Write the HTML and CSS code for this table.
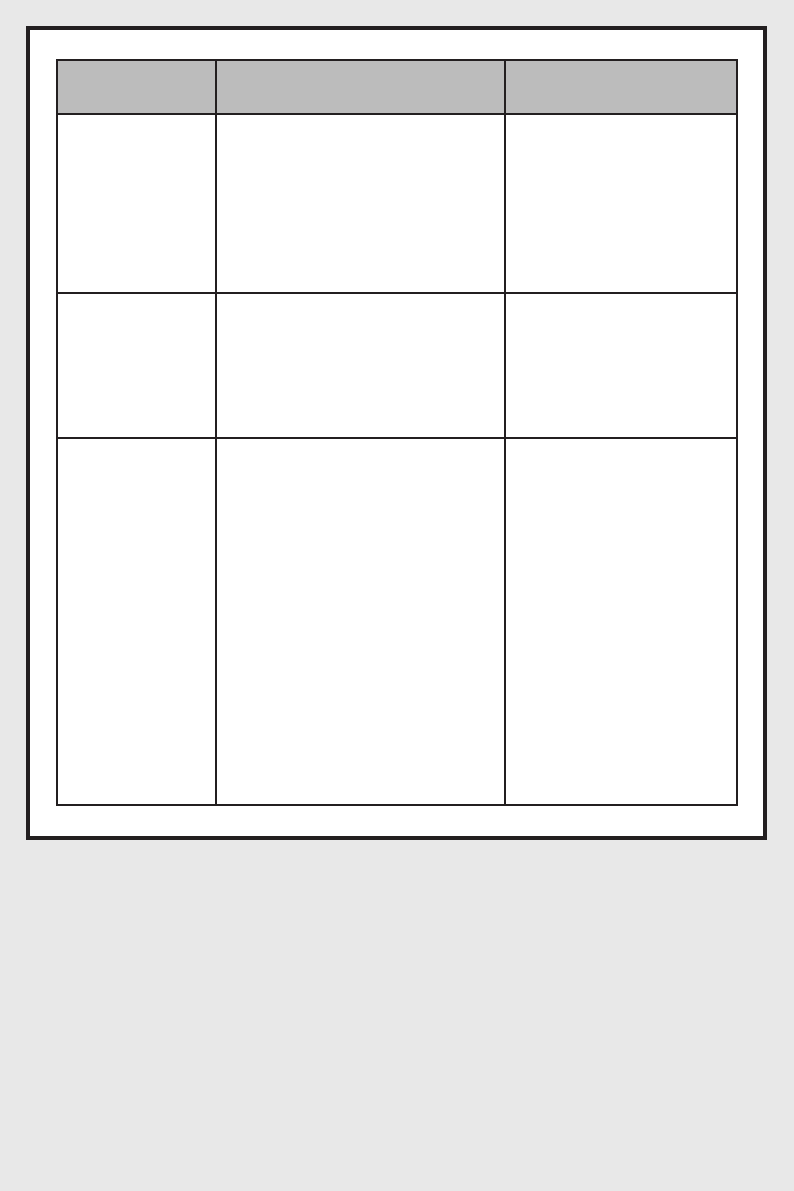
FILE: index.html
```html
<!DOCTYPE html>
<html lang="en">

<head>
    <meta charset="UTF-8">
    <meta name="viewport" content="width=device-width, initial-scale=1.0">
    <title>Worksheet</title>
    <link rel="stylesheet" href="styles.css">
</head>

<body>
    <div class="sheet">
        <table class="grid">
            <colgroup>
                <col class="col-a">
                <col class="col-b">
                <col class="col-c">
            </colgroup>
            <thead>
                <tr class="head-row">
                    <th></th>
                    <th></th>
                    <th></th>
                </tr>
            </thead>
            <tbody>
                <tr class="row-1">
                    <td></td>
                    <td></td>
                    <td></td>
                </tr>
                <tr class="row-2">
                    <td></td>
                    <td></td>
                    <td></td>
                </tr>
                <tr class="row-3">
                    <td></td>
                    <td></td>
                    <td></td>
                </tr>
            </tbody>
        </table>
    </div>
</body>

</html>
```

FILE: styles.css
```css
body {
    font-family: 'Liberation Sans', Arial, sans-serif;
    margin: 0;
    padding: 26px;
    background-color: #e8e8e8;
    min-height: 100vh;
    box-sizing: border-box;
}

.sheet {
    width: 741px;
    height: 814px;
    box-sizing: border-box;
    background-color: #fff;
    border: 4px solid #231f20;
    padding: 29px 25px 30px 26px;
}

.grid {
    width: 682px;
    border-collapse: collapse;
    table-layout: fixed;
}

.grid th,
.grid td {
    border: 2px solid #231f20;
    padding: 0;
}

.col-a {
    width: 159px;
}

.col-b {
    width: 289px;
}

.col-c {
    width: 232px;
}

.head-row th {
    background-color: #bcbcbc;
    height: 52px;
}

.row-1 td {
    height: 177px;
}

.row-2 td {
    height: 143px;
}

.row-3 td {
    height: 365px;
}
```
